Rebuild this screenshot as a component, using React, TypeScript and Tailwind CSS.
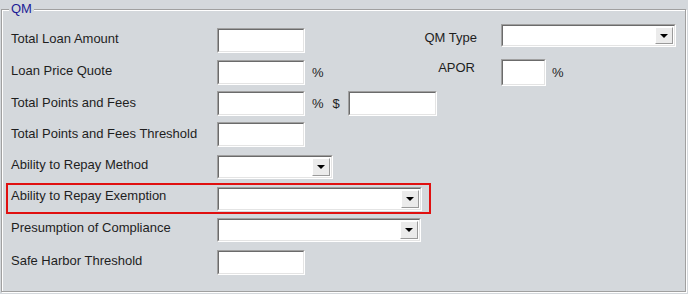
import React from 'react';

type Control =
  | { kind: 'input'; width: number; after?: React.ReactNode }
  | { kind: 'select'; width: number };

type Row = {
  label: string;
  height: number;
  labelTop: number;
  control: Control;
  highlight?: boolean;
};

function Field({ width, height = 25 }: { width: number; height?: number }) {
  return (
    <div
      className="border border-t-[#a0a0a0] border-l-[#a0a0a0] border-b-white border-r-white"
      style={{ width, height }}
    >
      <div className="h-full border border-t-[#6b6b6b] border-l-[#6b6b6b] border-b-[#e4e4e4] border-r-[#e4e4e4] bg-white" />
    </div>
  );
}

function Select({ width, height = 24 }: { width: number; height?: number }) {
  return (
    <div
      className="border border-t-[#a0a0a0] border-l-[#a0a0a0] border-b-white border-r-white"
      style={{ width, height }}
    >
      <div className="flex h-full justify-end border border-t-[#6b6b6b] border-l-[#6b6b6b] border-b-[#e4e4e4] border-r-[#e4e4e4] bg-white p-px">
        <div className="flex w-[18px] items-center justify-center border border-t-white border-l-white border-b-[#9a9a9a] border-r-[#9a9a9a] bg-[#ebebeb]">
          <svg width="8" height="4" viewBox="0 0 8 4">
            <polygon points="0,0 8,0 4,4" fill="#000" />
          </svg>
        </div>
      </div>
    </div>
  );
}

const topRows: Row[] = [
  { label: 'Total Loan Amount', height: 32, labelTop: 5, control: { kind: 'input', width: 88 } },
  {
    label: 'Loan Price Quote',
    height: 31,
    labelTop: 5,
    control: { kind: 'input', width: 88, after: <span className="ml-[7px]">%</span> },
  },
];

const rows: Row[] = [
  {
    label: 'Total Points and Fees',
    height: 31,
    labelTop: 6,
    control: {
      kind: 'input',
      width: 88,
      after: (
        <>
          <span className="ml-[7px]">%</span>
          <span className="ml-[9px]">$</span>
          <div className="ml-[8px]">
            <Field width={89} />
          </div>
        </>
      ),
    },
  },
  { label: 'Total Points and Fees Threshold', height: 33, labelTop: 6, control: { kind: 'input', width: 88 } },
  { label: 'Ability to Repay Method', height: 32, labelTop: 4, control: { kind: 'select', width: 116 } },
  {
    label: 'Ability to Repay Exemption',
    height: 31,
    labelTop: 3,
    control: { kind: 'select', width: 205 },
    highlight: true,
  },
  { label: 'Presumption of Compliance', height: 32, labelTop: 4, control: { kind: 'select', width: 204 } },
  { label: 'Safe Harbor Threshold', height: 32, labelTop: 5, control: { kind: 'input', width: 88 } },
];

function FormRow({ row }: { row: Row }) {
  const { control } = row;
  return (
    <div
      className={`flex items-start border-2 pl-[3px] ${
        row.highlight ? 'w-[425px] border-[#e01010]' : 'border-transparent'
      }`}
      style={{ height: row.height }}
    >
      <span className="w-[206px] shrink-0 whitespace-nowrap" style={{ marginTop: row.labelTop }}>
        {row.label}
      </span>
      <div className="mt-[2px] flex items-center">
        {control.kind === 'input' ? <Field width={control.width} /> : <Select width={control.width} />}
        {control.kind === 'input' && control.after}
      </div>
    </div>
  );
}

export default function App() {
  return (
    <div className="h-[294px] w-[688px] overflow-hidden bg-[#d4d8dc] pt-[9px] pl-px font-['Liberation_Sans',Arial,sans-serif] text-[13px] leading-[15px] text-[#1e1e1e]">
      <div className="relative h-[283px] w-[685px] border border-[#a0a0a0] pt-[14px] pl-[4px] shadow-[inset_1px_1px_0_#fff,1px_1px_0_#fff]">
        <span className="absolute -top-[9px] left-[7px] bg-[#d4d8dc] px-[2px] text-[#1c1c96]">QM</span>

        <div className="flex">
          <div className="flex flex-col items-start">
            {topRows.map((row) => (
              <FormRow key={row.label} row={row} />
            ))}
          </div>

          <div className="mr-[9px] ml-auto grid grid-cols-[60px_175px] gap-x-[24px]">
            <span className="mt-[6px] text-right">QM Type</span>
            <Select width={175} height={23} />
            <span className="mt-[10px] pr-[2px] text-right">APOR</span>
            <div className="mt-[8px] flex items-center">
              <Field width={45} height={27} />
              <span className="ml-[6px]">%</span>
            </div>
          </div>
        </div>

        <div className="flex flex-col items-start">
          {rows.map((row) => (
            <FormRow key={row.label} row={row} />
          ))}
        </div>
      </div>
    </div>
  );
}
